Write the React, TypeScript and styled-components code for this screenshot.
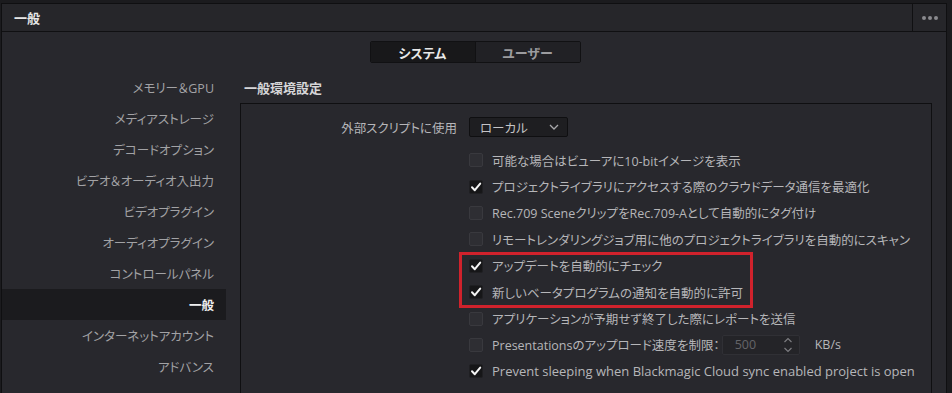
import React from "react";
import styled, { createGlobalStyle } from "styled-components";

const Global = createGlobalStyle`
  html, body { margin: 0; padding: 0; background: #1b1b1e; }
  body {
    font-family: "Open Sans", "Noto Sans CJK JP", sans-serif;
    font-feature-settings: "palt";
    -webkit-font-smoothing: antialiased;
  }
`;

const Screen = styled.div`
  width: 952px;
  height: 393px;
  overflow: hidden;
  background: #1b1b1e;
  padding-top: 3px;
  box-sizing: border-box;
`;

const Window = styled.div`
  margin-left: 1px;
  width: 946px;
  box-sizing: border-box;
  border-left: 1px solid #0f0f11;
  border-right: 1px solid #0f0f11;
  border-top: 1px solid #0f0f11;
  background: #28282d;
  display: flex;
  flex-direction: column;
`;

const Header = styled.div`
  flex: none;
  height: 27px;
  display: flex;
  align-items: stretch;
  background: #26262a;
  border-bottom: 1px solid #101012;
`;

const Title = styled.div`
  flex: 1;
  display: flex;
  align-items: center;
  padding-left: 12px;
  font-size: 13px;
  font-weight: 700;
  color: #e6e6e6;
`;

const MoreButton = styled.div`
  width: 33px;
  border-left: 1px solid #101012;
  display: flex;
  align-items: center;
  justify-content: center;
  gap: 2px;
`;

const Dot = styled.span`
  width: 4px;
  height: 4px;
  border-radius: 50%;
  background: #8a8a8e;
`;

const TabsRow = styled.div`
  flex: none;
  display: flex;
  justify-content: center;
  padding-top: 9px;
  padding-left: 2px;
`;

const Tabs = styled.div`
  display: flex;
  border: 1px solid #111113;
  border-radius: 2px;
  overflow: hidden;
`;

const Tab = styled.div<{ $active?: boolean }>`
  width: 104px;
  height: 20px;
  display: flex;
  align-items: center;
  justify-content: center;
  font-size: 13px;
  font-weight: 700;
  background: ${(p) => (p.$active ? "#18181a" : "#212125")};
  color: ${(p) => (p.$active ? "#e8e8e8" : "#9c9c9f")};
  & + & {
    border-left: 1px solid #111113;
  }
`;

const Main = styled.div`
  flex: none;
  display: grid;
  grid-template-columns: 224px 1fr;
  column-gap: 14px;
  padding-top: 9px;
`;

const Sidebar = styled.div`
  display: flex;
  flex-direction: column;
`;

const NavItem = styled.div<{ $active?: boolean }>`
  height: 31px;
  display: flex;
  align-items: center;
  justify-content: flex-end;
  padding-right: 12px;
  font-size: 12.5px;
  color: ${(p) => (p.$active ? "#f0f0f0" : "#a2a2a5")};
  font-weight: ${(p) => (p.$active ? 700 : 400)};
  background: ${(p) => (p.$active ? "#1b1b1e" : "transparent")};
`;

const Content = styled.div`
  display: flex;
  flex-direction: column;
  padding-right: 14px;
`;

const SectionTitle = styled.div`
  height: 31px;
  display: flex;
  align-items: center;
  padding-left: 4px;
  font-size: 13px;
  font-weight: 700;
  color: #d6d6d8;
`;

const Panel = styled.div`
  position: relative;
  border: 1px solid #0f0f11;
  border-bottom: none;
  height: 320px;
  padding-top: 3px;
  box-sizing: border-box;
`;

const Grid = styled.div`
  display: grid;
  grid-template-columns: 216px 1fr;
  grid-template-rows: 40px;
  grid-auto-rows: 26.4px;
  column-gap: 12px;
  align-items: center;
`;

const FieldLabel = styled.div`
  text-align: right;
  font-size: 12.5px;
  color: #b6b6b9;
`;

const Select = styled.div`
  width: 99px;
  height: 20px;
  box-sizing: border-box;
  display: flex;
  align-items: center;
  justify-content: space-between;
  padding: 0 8px 0 10px;
  background: #1e1e21;
  border: 1px solid #0f0f11;
  border-radius: 2px;
  font-size: 12.5px;
  color: #c4c4c6;
`;

const Spacer = styled.div``;

const CheckRow = styled.label<{ $latin?: boolean }>`
  display: flex;
  align-items: center;
  gap: 9px;
  font-size: ${(p) => (p.$latin ? "13px" : "12.5px")};
  color: #b6b6b9;
  white-space: nowrap;
`;

const Box = styled.span<{ $on?: boolean }>`
  width: 14px;
  height: 14px;
  box-sizing: border-box;
  flex: none;
  display: flex;
  align-items: center;
  justify-content: center;
  border-radius: 2px;
  background: ${(p) => (p.$on ? "#161618" : "#2e2e33")};
  border: 1px solid ${(p) => (p.$on ? "#1f1f22" : "#39393e")};
`;

const NumberInput = styled.div`
  width: 78px;
  height: 20px;
  box-sizing: border-box;
  margin-left: -7px;
  display: flex;
  align-items: center;
  justify-content: space-between;
  padding: 0 6px 0 12px;
  background: #242428;
  border: 1px solid #303035;
  border-radius: 2px;
  color: #646468;
  font-size: 12.5px;
`;

const Unit = styled.span`
  margin-left: 6px;
  color: #b6b6b9;
`;

const Highlight = styled.div`
  position: absolute;
  left: 218px;
  top: 148px;
  width: 294px;
  height: 56px;
  box-sizing: border-box;
  border: 3px solid #d0222c;
  pointer-events: none;
`;

const Check = () => (
  <svg width="12" height="12" viewBox="0 0 12 12">
    <path d="M2 6.3 L4.8 9.2 L10.2 2.6" fill="none" stroke="#f4f4f4" strokeWidth="2" strokeLinecap="round" strokeLinejoin="round" />
  </svg>
);

const Chevron = () => (
  <svg width="10" height="6" viewBox="0 0 10 6">
    <path d="M1 1 L5 5 L9 1" fill="none" stroke="#a8a8ab" strokeWidth="1.3" />
  </svg>
);

const Stepper = () => (
  <svg width="10" height="18" viewBox="0 0 10 18">
    <path d="M1.5 6 L5 2.5 L8.5 6" fill="none" stroke="#7c7c80" strokeWidth="1.2" />
    <path d="M1.5 12 L5 15.5 L8.5 12" fill="none" stroke="#7c7c80" strokeWidth="1.2" />
  </svg>
);

const nav = [
  "メモリー＆GPU",
  "メディアストレージ",
  "デコードオプション",
  "ビデオ＆オーディオ入出力",
  "ビデオプラグイン",
  "オーディオプラグイン",
  "コントロールパネル",
  "一般",
  "インターネットアカウント",
  "アドバンス",
];

const checks: { label: React.ReactNode; on: boolean; latin?: boolean }[] = [
  { label: "可能な場合はビューアに10-bitイメージを表示", on: false },
  { label: "プロジェクトライブラリにアクセスする際のクラウドデータ通信を最適化", on: true },
  { label: "Rec.709 SceneクリップをRec.709-Aとして自動的にタグ付け", on: false },
  { label: "リモートレンダリングジョブ用に他のプロジェクトライブラリを自動的にスキャン", on: false },
  { label: "アップデートを自動的にチェック", on: true },
  { label: "新しいベータプログラムの通知を自動的に許可", on: true },
  { label: "アプリケーションが予期せず終了した際にレポートを送信", on: false },
  {
    label: (
      <>
        Presentationsのアップロード速度を制限：
        <NumberInput>
          <span>500</span>
          <Stepper />
        </NumberInput>
        <Unit>KB/s</Unit>
      </>
    ),
    on: false,
  },
  { label: "Prevent sleeping when Blackmagic Cloud sync enabled project is open", on: true, latin: true },
];

export default function App() {
  return (
    <>
      <Global />
      <Screen>
        <Window>
          <Header>
            <Title>一般</Title>
            <MoreButton>
              <Dot />
              <Dot />
              <Dot />
            </MoreButton>
          </Header>
          <TabsRow>
            <Tabs>
              <Tab $active>システム</Tab>
              <Tab>ユーザー</Tab>
            </Tabs>
          </TabsRow>
          <Main>
            <Sidebar>
              {nav.map((n) => (
                <NavItem key={n} $active={n === "一般"}>
                  {n}
                </NavItem>
              ))}
            </Sidebar>
            <Content>
              <SectionTitle>一般環境設定</SectionTitle>
              <Panel>
                <Grid>
                  <FieldLabel>外部スクリプトに使用</FieldLabel>
                  <Select>
                    <span>ローカル</span>
                    <Chevron />
                  </Select>
                  {checks.map((c, i) => (
                    <React.Fragment key={i}>
                      <Spacer />
                      <CheckRow $latin={c.latin}>
                        <Box $on={c.on}>{c.on && <Check />}</Box>
                        {c.label}
                      </CheckRow>
                    </React.Fragment>
                  ))}
                </Grid>
                <Highlight />
              </Panel>
            </Content>
          </Main>
        </Window>
      </Screen>
    </>
  );
}
